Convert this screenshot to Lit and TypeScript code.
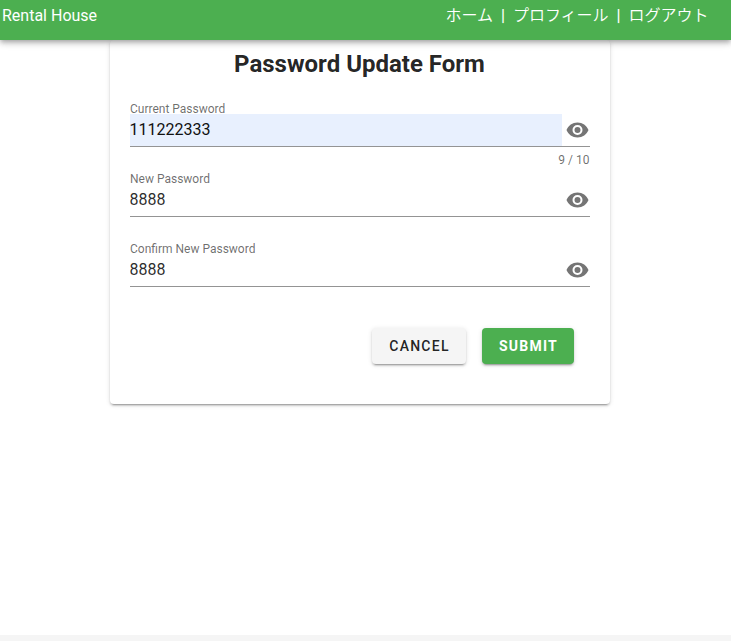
import { LitElement, html, css } from "lit";
import { customElement, property, state } from "lit/decorators.js";
import { classMap } from "lit/directives/class-map.js";

@customElement("password-field")
class PasswordField extends LitElement {
  @property() label = "";
  @property() value = "";
  @property() counter = "";
  @property({ type: Boolean }) filled = false;

  static styles = css`
    :host { display: block; height: 70px; box-sizing: border-box; padding-top: 16px; }
    .slot {
      display: flex; position: relative; align-items: center;
      height: 32px; margin-bottom: 7px; border-bottom: 1px solid #949494;
    }
    label {
      position: absolute; left: 0; top: -12px; font-size: 12px; line-height: 15px;
      color: rgba(0, 0, 0, 0.58); white-space: nowrap;
    }
    input {
      flex: 1; min-width: 0; height: 32px; box-sizing: border-box; border: 0; outline: 0;
      padding: 6px 0 8px; margin: 0; background: transparent; text-indent: -0.5px;
      font: 16px/18px Roboto, sans-serif; color: rgba(0, 0, 0, 0.84);
    }
    .filled input { background: #e8f0fe; color: #111; }
    .icon { flex: none; width: 28px; height: 24px; }
    .eye { display: block; width: 28px; height: 24px; fill: #757575; }
    .count { font-size: 12px; line-height: 12px; text-align: right; padding-right: 0.5px; color: rgba(0, 0, 0, 0.58); }
  `;

  render() {
    return html`
      <div class=${classMap({ slot: true, filled: this.filled })}>
        <input id="field" type="text" spellcheck="false" .value=${this.value} />
        <label for="field">${this.label}</label>
        <div class="icon">
          <svg class="eye" viewBox="-3.5 0 28 24">
            <path d="M12,9A3,3 0 0,0 9,12A3,3 0 0,0 12,15A3,3 0 0,0 15,12A3,3 0 0,0 12,9M12,17A5,5 0 0,1 7,12A5,5 0 0,1 12,7A5,5 0 0,1 17,12A5,5 0 0,1 12,17M12,4.5C7,4.5 2.73,7.61 1,12C2.73,16.39 7,19.5 12,19.5C17,19.5 21.27,16.39 23,12C21.27,7.61 17,4.5 12,4.5Z" />
          </svg>
        </div>
      </div>
      <div class="count">${this.counter}</div>
    `;
  }
}

@customElement("app-root")
class AppRoot extends LitElement {
  @state() private fields = [
    { label: "Current Password", value: "111222333", counter: "9 / 10", filled: true },
    { label: "New Password", value: "8888", counter: "", filled: false },
    { label: "Confirm New Password", value: "8888", counter: "", filled: false },
  ];

  static styles = css`
    :host {
      display: flex; flex-direction: column; height: 641px; overflow: hidden;
      background: #fff; color: rgba(0, 0, 0, 0.87);
      font: 16px/24px Roboto, "Noto Sans CJK JP", sans-serif;
    }
    header {
      display: flex; justify-content: space-between; flex: none; position: relative; z-index: 1;
      height: 40px; box-sizing: border-box; padding: 4px 22.5px 0 2px;
      background: #4caf50; color: #fff;
      box-shadow: 0 2px 4px -1px rgba(0, 0, 0, 0.2), 0 4px 5px rgba(0, 0, 0, 0.14), 0 1px 10px rgba(0, 0, 0, 0.12);
    }
    nav { display: flex; white-space: pre; }
    .link { font-weight: 350; }
    .bar { font-weight: 500; }
    main { flex: 1; }
    .card {
      width: 500px; height: 364px; box-sizing: border-box; margin-left: 110px; padding: 8px 20px 0;
      background: #fff; border-radius: 4px;
      box-shadow: 0 3px 1px -2px rgba(0, 0, 0, 0.2), 0 2px 2px rgba(0, 0, 0, 0.14), 0 1px 5px rgba(0, 0, 0, 0.12);
    }
    h2 { margin: 0 0 18px; padding-right: 1px; font-size: 24px; line-height: 32px; font-weight: 700; text-align: center; }
    .actions { display: flex; justify-content: flex-end; gap: 16px; padding: 20px 16px 0 0; }
    button {
      height: 36px; padding: 0 0 0 1px; border: 0; border-radius: 4px;
      font: 500 14px/36px Roboto, sans-serif; letter-spacing: 1.25px;
      box-shadow: 0 3px 1px -2px rgba(0, 0, 0, 0.2), 0 2px 2px rgba(0, 0, 0, 0.14), 0 1px 5px rgba(0, 0, 0, 0.12);
    }
    .cancel { width: 94px; background: #f5f5f5; color: rgba(0, 0, 0, 0.87); }
    .submit { width: 92px; background: #4caf50; color: #fff; font-weight: 700; }
    footer { flex: none; height: 6px; background: #f5f5f5; }
  `;

  render() {
    return html`
      <header>
        <span>Rental House</span>
        <nav><span class="link">ホーム</span><span class="bar">  |  </span><span class="link">プロフィール</span><span class="bar">  |  </span><span class="link">ログアウト</span></nav>
      </header>
      <main>
        <section class="card">
          <h2>Password Update Form</h2>
          ${this.fields.map(
            (f) => html`<password-field .label=${f.label} .value=${f.value} .counter=${f.counter} .filled=${f.filled}></password-field>`
          )}
          <div class="actions">
            <button class="cancel">CANCEL</button>
            <button class="submit">SUBMIT</button>
          </div>
        </section>
      </main>
      <footer></footer>
    `;
  }
}
